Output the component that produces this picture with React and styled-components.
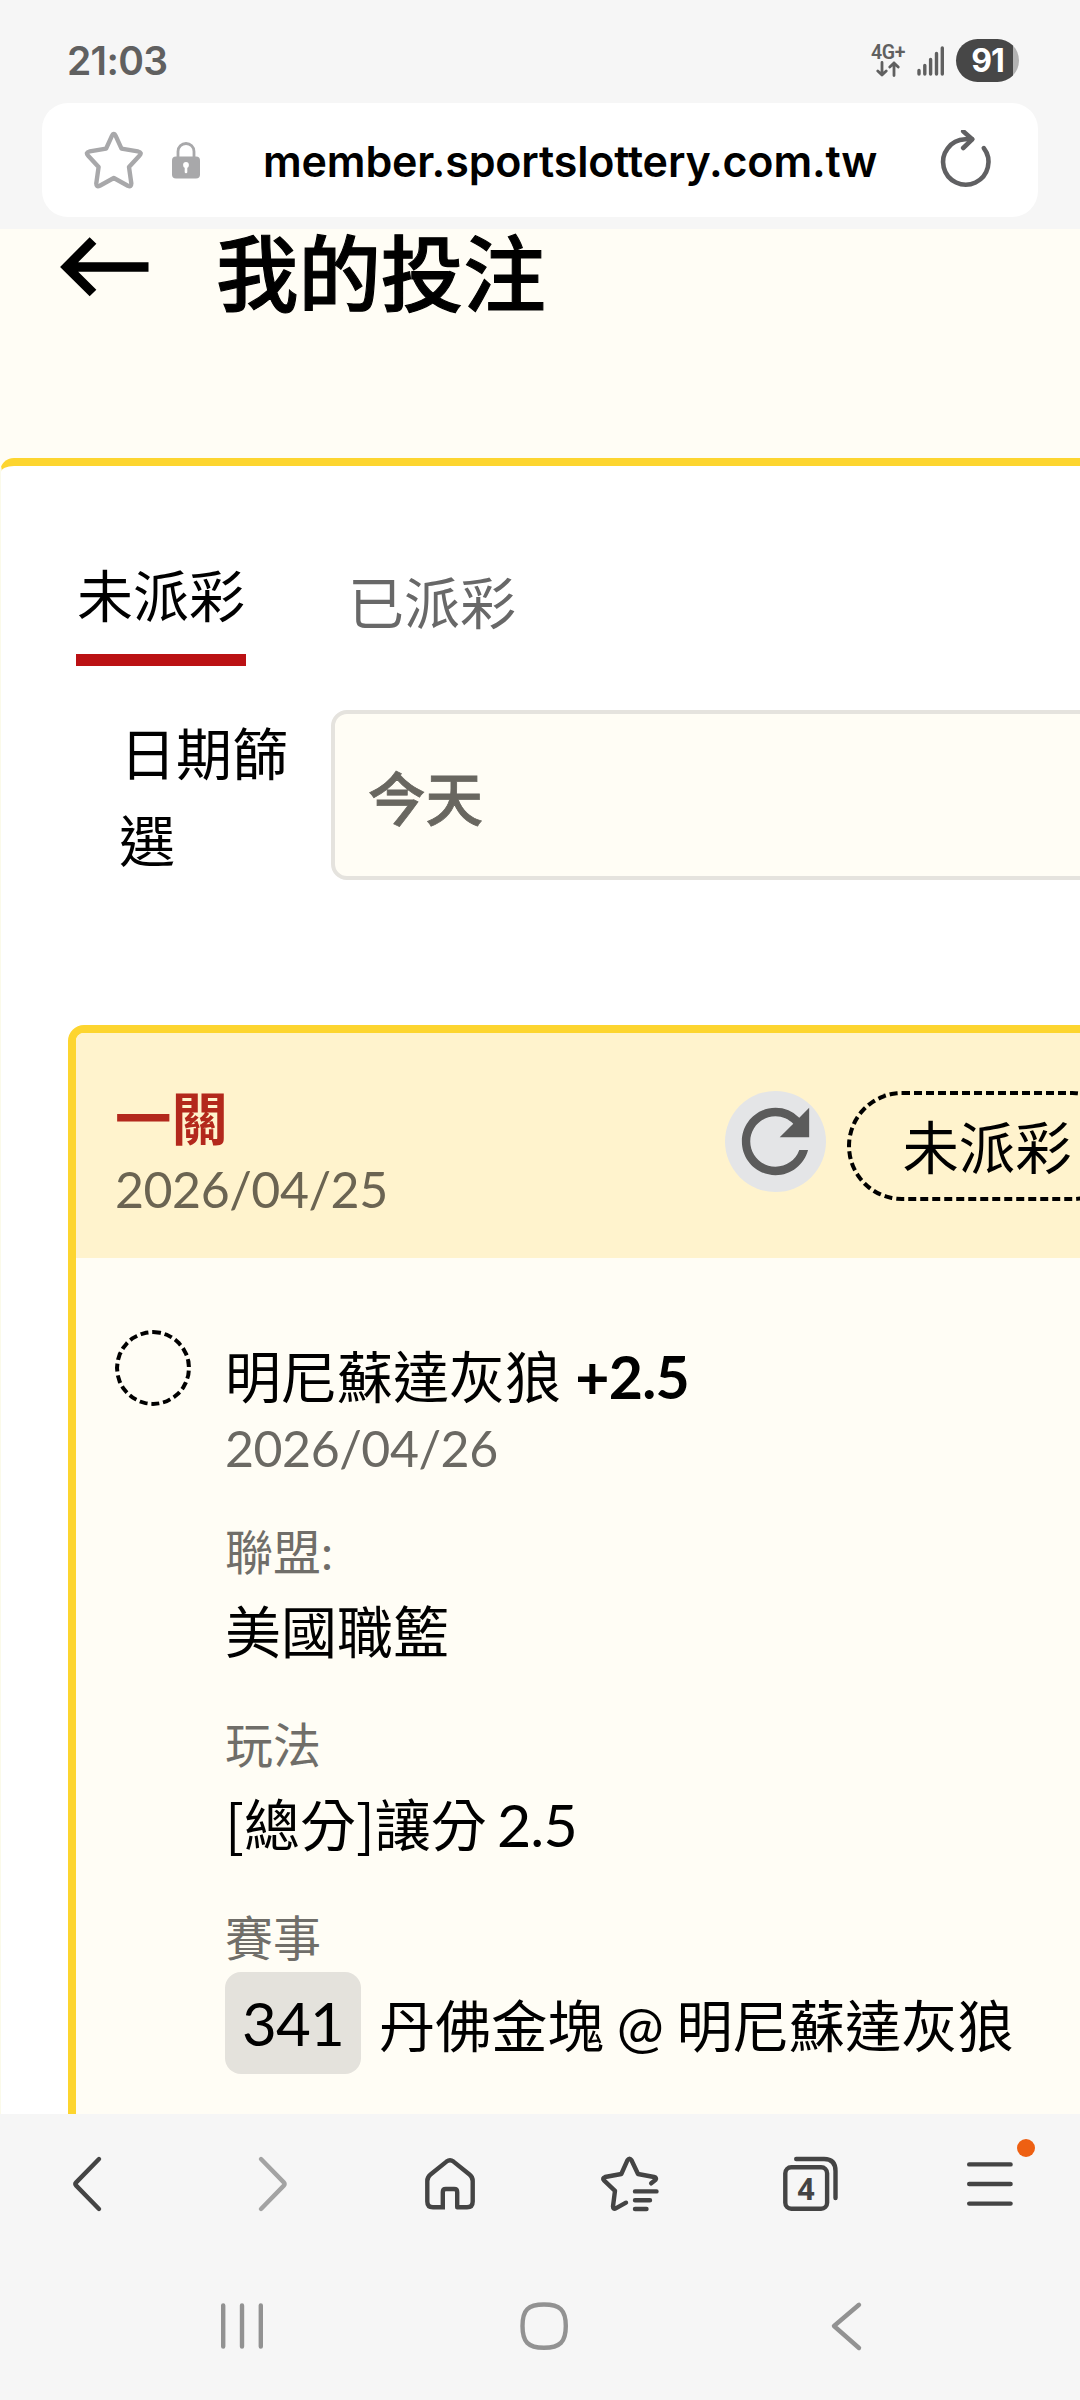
import React from "react";
import styled, { createGlobalStyle } from "styled-components";

const Global = createGlobalStyle`
  *, *::before, *::after { box-sizing: border-box; }
  html, body { margin: 0; padding: 0; background: #f6f6f6; }
`;

const cjk = `Lato, "Noto Sans CJK TC", sans-serif`;

const Screen = styled.div`
  width: 1080px;
  height: 2400px;
  display: flex;
  flex-direction: column;
  overflow: hidden;
  background: #f6f6f6;
  color: #000;
  font-family: ${cjk};
`;

const StatusBar = styled.header`
  height: 103px;
  padding: 18px 61px 0 67px;
  display: flex;
  align-items: center;
  justify-content: space-between;
  color: #606060;
`;

const Clock = styled.time`
  font: 600 39px/44px Inter, sans-serif;
  letter-spacing: -0.7px;
`;

const StatusIcons = styled.div`
  display: flex;
  align-items: center;
`;

const Network = styled.div`
  display: flex;
  flex-direction: column;
  align-items: center;
  width: 34px;
  margin-right: 12px;
  font: 600 19.5px/17px Roboto, sans-serif;
  letter-spacing: -0.4px;
`;

const Signal = styled.svg`
  margin-right: 11px;
`;

const Battery = styled.div`
  width: 63px;
  height: 43px;
  border-radius: 21.5px;
  background: linear-gradient(to right, #474747 57px, #b3b3b3 57px);
  color: #fff;
  font: 700 32px/43px Inter, sans-serif;
  letter-spacing: -1px;
  text-align: center;
`;

const AddressBar = styled.div`
  flex: none;
  height: 114px;
  margin: 0 42px 12px;
  padding: 0 43px 0 41px;
  border-radius: 26px;
  background: #fff;
  display: flex;
  align-items: center;
`;

const Url = styled.span`
  flex: 1;
  margin-left: 63px;
  padding-top: 2px;
  font: 600 43px/60px Inter, sans-serif;
  letter-spacing: -0.15px;
  white-space: nowrap;
`;

const Page = styled.main`
  flex: none;
  height: 1885px;
  overflow: hidden;
  background: #fffdf5;
  display: flex;
  flex-direction: column;
`;

const PageHeader = styled.div`
  flex: none;
  height: 229px;
  padding-left: 60px;
  display: flex;
  align-items: flex-start;
  gap: 66px;
`;

const BackArrow = styled.svg`
  flex: none;
  margin-top: 7px;
`;

const Title = styled.h1`
  margin: 0;
  font-size: 82.4px;
  line-height: 90px;
  font-weight: 500;
  -webkit-text-stroke: 1.1px currentColor;
`;

const Panel = styled.section`
  flex: 1;
  width: 1300px;
  border-top: 8px solid #fdd52f;
  border-left: 1px solid #fbfaea;
  border-radius: 14px 0 0 0;
  background: #fff;
  padding: 87px 0 0 67px;
`;

const Tabs = styled.nav`
  display: flex;
  align-items: flex-start;
  padding-left: 8px;
  gap: 101px;
  height: 157px;
`;

const Tab = styled.button`
  width: 170px;
  border: 0;
  background: none;
  padding: ${(p) => (p.$active ? "8px 0 23px" : "15px 0 0")};
  border-bottom: ${(p) => (p.$active ? "12px solid #bb1114" : "0")};
  font: 400 56px/70px ${cjk};
  color: ${(p) => (p.$active ? "#000" : "#686868")};
`;

const Filter = styled.div`
  display: flex;
  align-items: flex-start;
  height: 315px;
`;

const FilterLabel = styled.label`
  flex: none;
  width: 211px;
  padding: 0 0 0 51px;
  font-size: 56px;
  line-height: 87px;
  white-space: nowrap;
`;

const FilterLine = styled.span`
  display: block;
  padding-left: ${(p) => (p.$indent ? "1px" : "0")};
`;

const Select = styled.div`
  flex: none;
  width: 900px;
  height: 170px;
  margin-left: 52px;
  padding: 7px 0 0 33px;
  border: 4px solid #e5e3de;
  border-radius: 16px;
  background: #fffdf5;
  display: flex;
  align-items: center;
  font-size: 57.5px;
  line-height: 70px;
  font-weight: 500;
  -webkit-text-stroke: 0.8px currentColor;
  color: #696760;
`;

const Card = styled.article`
  width: 1180px;
  height: 1400px;
  border: 8px solid #fdd52f;
  border-radius: 16px;
  overflow: hidden;
  background: #fffdf5;
`;

const CardHeader = styled.div`
  height: 225px;
  padding: 50px 0 0 39px;
  background: #fff3cd;
  display: flex;
  align-items: flex-start;
`;

const Summary = styled.div`
  width: 610px;
`;

const Kind = styled.div`
  font-size: 56.4px;
  line-height: 70px;
  font-weight: 700;
  color: #b3281c;
`;

const DateText = styled.div`
  font-size: 50px;
  line-height: 72px;
  letter-spacing: -0.45px;
  color: ${(p) => p.$color || "#6b6963"};
`;

const RefreshButton = styled.button`
  flex: none;
  width: 101px;
  height: 101px;
  margin: 8px 21px 0 0;
  padding: 0;
  border: 0;
  border-radius: 50%;
  background: #e4e5e7;
  svg { display: block; }
`;

const StatusPill = styled.span`
  flex: none;
  width: 280px;
  height: 110px;
  margin-top: 8px;
  border: 4px dashed #000;
  border-radius: 55px;
  text-align: center;
  font-size: 56.4px;
  line-height: 105px;
`;

const Leg = styled.div`
  display: flex;
  align-items: flex-start;
  padding: 72px 0 0 39px;
`;

const Pending = styled.span`
  flex: none;
  width: 76px;
  height: 76px;
  margin-right: 34px;
  border: 4px dashed #000;
  border-radius: 50%;
`;

const Details = styled.div`
  padding-top: 12px;
`;

const Value = styled.div`
  font-size: 56px;
  line-height: 70px;
  white-space: pre;
  display: flex;
  align-items: center;
  height: ${(p) => p.$h || 70}px;
`;

const Num = styled.span`
  font-size: 59px;
  font-weight: ${(p) => (p.$bold ? 700 : 400)};
  letter-spacing: -0.8px;
`;

const Play = styled.span`
  margin-bottom: 6px;
  font-family: "Noto Sans CJK TC", sans-serif;
  word-spacing: -2.5px;
`;

const Label = styled.div`
  margin-top: ${(p) => p.$gap || 0}px;
  margin-bottom: ${(p) => p.$after || 0}px;
  font-size: 48px;
  line-height: 60px;
  color: #706e69;
`;

const Badge = styled.span`
  width: 136px;
  height: 102px;
  margin-right: 18px;
  border-radius: 16px;
  background: #e4e2dc;
  text-align: center;
  font-size: 60px;
  letter-spacing: -0.8px;
  line-height: 102px;
`;

const Match = styled.span`
  padding-top: 6px;
  font-size: 56.2px;
  word-spacing: -1.5px;
`;

const Toolbar = styled.nav`
  flex: none;
  height: 140px;
  display: grid;
  grid-template-columns: repeat(6, 180px);
  align-items: center;
  justify-items: center;
`;

const ToolItem = styled.button`
  position: relative;
  width: 60px;
  height: 60px;
  padding: 0;
  border: 0;
  background: none;
  color: ${(p) => (p.$muted ? "#a3a3a3" : "#444")};
  svg { display: block; }
`;

const NavItem = styled(ToolItem)`
  color: #929292;
`;

const TabCount = styled.span`
  position: absolute;
  left: 5px;
  top: 19px;
  width: 42px;
  text-align: center;
  font: 700 30px/31px "Noto Sans", sans-serif;
`;

const Dot = styled.i`
  position: absolute;
  left: 57px;
  top: -15px;
  width: 18px;
  height: 18px;
  border-radius: 50%;
  background: #ee6012;
`;

const SystemNav = styled.nav`
  flex: none;
  height: 143px;
  padding-left: 91px;
  display: grid;
  grid-template-columns: repeat(3, 302px);
  align-items: center;
  justify-items: center;
`;

const LockIcon = styled.svg`
  flex: none;
  margin-left: 29px;
`;

const Stroke = ({ size = 60, w = 4.4, children, ...rest }) => (
  <svg
    width={size}
    height={size}
    viewBox={`0 0 ${size} ${size}`}
    fill="none"
    stroke="currentColor"
    strokeWidth={w}
    strokeLinecap="round"
    strokeLinejoin="round"
    {...rest}
  >
    {children}
  </svg>
);

export default function App() {
  return (
    <Screen>
      <Global />
      <StatusBar>
        <Clock>21:03</Clock>
        <StatusIcons>
          <Network>
            4G+
            <svg width="24" height="16" viewBox="0 0 24 16" fill="none" stroke="currentColor" strokeWidth="2.8" strokeLinecap="round" strokeLinejoin="round">
              <path d="M6 1.5V14M1.8 10L6 14L10.2 10M18 14.5V2M13.8 6L18 2L22.2 6" />
            </svg>
          </Network>
          <Signal width="28" height="30" viewBox="0 0 28 30" stroke="currentColor" strokeWidth="3.4" strokeLinecap="round">
            <path d="M2 24.5V28M7.8 19.5V28M13.6 13.5V28M19.5 7.5V28M25.3 2V28" />
          </Signal>
          <Battery>91</Battery>
        </StatusIcons>
      </StatusBar>

      <AddressBar>
        <Stroke color="#a8a8aa">
          <path d="M28.8 6.2Q30.8 1.8 32.8 6.2L38.5 18.6L54.8 21.4Q59.6 22.4 56.4 25.8L46 37L48.3 53.2Q48.5 57.4 44.8 55.7L30.8 48L16.8 55.7Q13.1 57.4 13.3 53.2L15.6 37L5.2 25.8Q2 22.4 6.8 21.4L23.1 18.6Z" />
        </Stroke>
        <LockIcon width="28" height="37" viewBox="0 0 28 37">
          <path d="M6 16V9.5a8 8 0 0 1 16 0V16" fill="none" stroke="#a8a8aa" strokeWidth="2.8" />
          <rect x="0" y="14.5" width="28" height="22" rx="4" fill="#a8a8aa" />
          <circle cx="14" cy="23" r="2.9" fill="#fff" />
          <path d="M14 23V30" stroke="#fff" strokeWidth="2.6" strokeLinecap="round" />
        </LockIcon>
        <Url>member.sportslottery.com.tw</Url>
        <Stroke color="#606062" w={4.6}>
          <path d="M48.8 18.2A22.7 22.7 0 1 1 30 9.3H37" />
          <path d="M28.2 1.3L37.2 9.3L28.2 18" />
        </Stroke>
      </AddressBar>

      <Page>
        <PageHeader>
          <BackArrow width="90" height="62" viewBox="0 0 90 62" fill="none" stroke="#000" strokeWidth="9.5">
            <path d="M88.5 31H8M33 4.5L6.8 31L33 57" />
          </BackArrow>
          <Title>我的投注</Title>
        </PageHeader>
        <Panel>
          <Tabs>
            <Tab $active>未派彩</Tab>
            <Tab>已派彩</Tab>
          </Tabs>
          <Filter>
            <FilterLabel>
              <FilterLine $indent>日期篩</FilterLine>
              <FilterLine>選</FilterLine>
            </FilterLabel>
            <Select>今天</Select>
          </Filter>
          <Card>
            <CardHeader>
              <Summary>
                <Kind>一關</Kind>
                <DateText $color="#6b6452">2026/04/25</DateText>
              </Summary>
              <RefreshButton aria-label="refresh">
                <svg width="101" height="101" viewBox="0 0 24 24" fill="#5b5b5b">
                  <path d="M17.65 6.35A7.958 7.958 0 0 0 12 4c-4.42 0-7.99 3.58-7.99 8s3.57 8 7.99 8c3.73 0 6.84-2.55 7.73-6h-2.08A5.99 5.99 0 0 1 12 18c-3.31 0-6-2.69-6-6s2.69-6 6-6c1.66 0 3.14.69 4.22 1.78L13 11h7V4l-2.35 2.35z" />
                </svg>
              </RefreshButton>
              <StatusPill>未派彩</StatusPill>
            </CardHeader>
            <Leg>
              <Pending />
              <Details>
                <Value>明尼蘇達灰狼 <Num $bold>+2.5</Num></Value>
                <DateText>2026/04/26</DateText>
                <Label $gap={38} $after={15}>聯盟:</Label>
                <Value>美國職籃</Value>
                <Label $gap={48} $after={15}>玩法</Label>
                <Value><Play>[總分]讓分 </Play><Num>2.5</Num></Value>
                <Label $gap={48} $after={4}>賽事</Label>
                <Value $h={102}>
                  <Badge>341</Badge>
                  <Match>丹佛金塊 @ 明尼蘇達灰狼</Match>
                </Value>
              </Details>
            </Leg>
          </Card>
        </Panel>
      </Page>

      <Toolbar>
        <ToolItem>
          <Stroke>
            <path d="M39 5L16.2 28.4Q14.6 30 16.2 31.6L39 55" />
          </Stroke>
        </ToolItem>
        <ToolItem $muted>
          <Stroke>
            <path d="M21 5L43.8 28.4Q45.4 30 43.8 31.6L21 55" />
          </Stroke>
        </ToolItem>
        <ToolItem>
          <Stroke strokeLinecap="butt">
            <path d="M25 53.3H13Q7.3 53.3 7.3 47.5V27Q7.3 23 10.5 20.5L26.5 7.6Q30 5 33.5 7.6L49.5 20.5Q52.7 23 52.7 27V47.5Q52.7 53.3 47 53.3H37.2V38Q37.2 35 34.2 35H25.8Q22.8 35 22.8 38V53.3" />
          </Stroke>
        </ToolItem>
        <ToolItem>
          <Stroke>
            <path d="M51.2 29.3L55.6 25.8Q57 23.8 54 23L38 20L31.5 6.2Q29.5 3 27.5 6.2L21.3 20L5 23Q2 24 4 26.4L15 36.8L13 52.4Q13 56 16.2 54.2L26 48.7" />
            <path d="M35 37.4H56.5M35 46.2H50M35 55H46.5" />
          </Stroke>
        </ToolItem>
        <ToolItem>
          <Stroke>
            <rect x="5.3" y="13.2" width="41.8" height="41.6" rx="6" />
            <path d="M16.2 5H44Q55.5 5 55.5 17V44" />
          </Stroke>
          <TabCount>4</TabCount>
        </ToolItem>
        <ToolItem>
          <Stroke>
            <path d="M9.2 10.4H50.6M9.2 30H50.6M9.2 49.6H50.6" />
          </Stroke>
          <Dot />
        </ToolItem>
      </Toolbar>

      <SystemNav>
        <NavItem>
          <Stroke>
            <path d="M11.2 9.5V50.5M30 9.5V50.5M48.8 9.5V50.5" />
          </Stroke>
        </NavItem>
        <NavItem>
          <Stroke>
            <path d="M30 8.5C46 8.5 51.8 14 51.8 30S46 51.8 30 51.8S8.5 46 8.5 30S14 8.5 30 8.5Z" />
          </Stroke>
        </NavItem>
        <NavItem>
          <Stroke>
            <path d="M43 8.8L18 30L43 52" />
          </Stroke>
        </NavItem>
      </SystemNav>
    </Screen>
  );
}
